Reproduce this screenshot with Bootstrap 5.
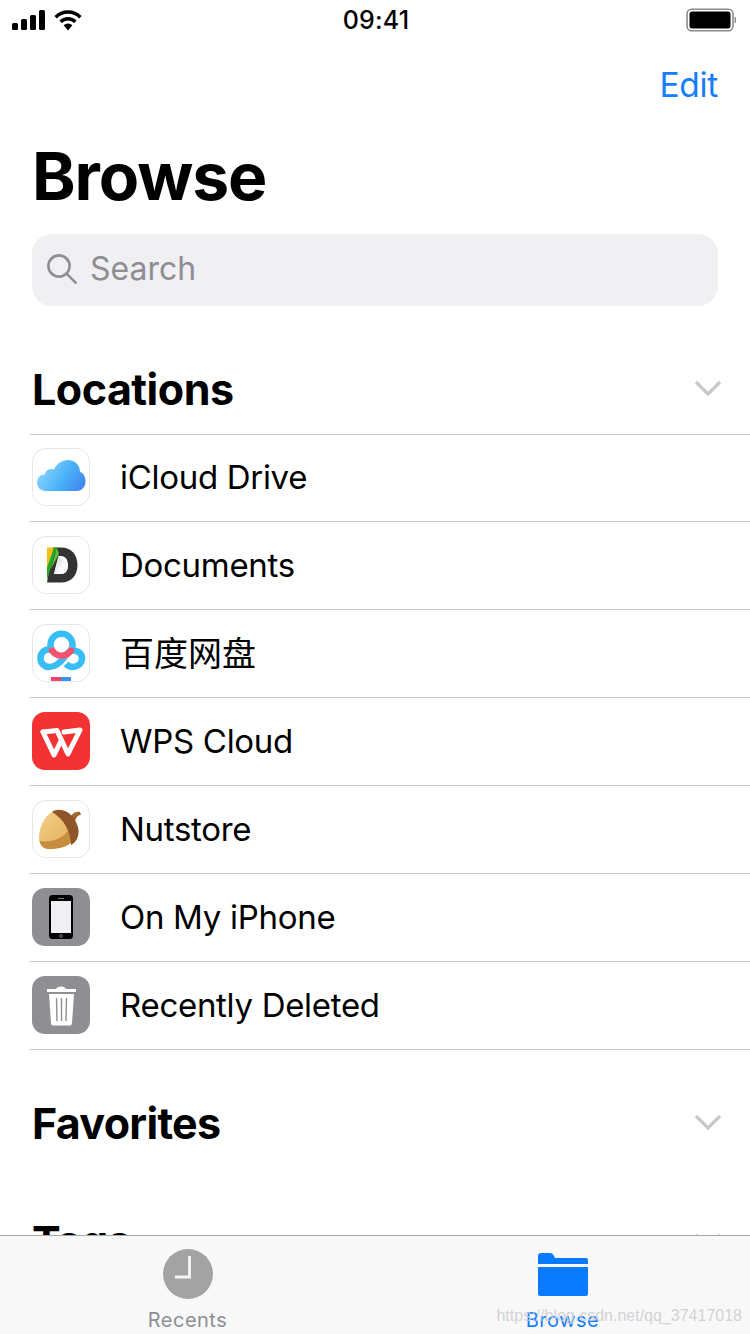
<!DOCTYPE html>
<html lang="en">
<head>
  <meta charset="UTF-8" />
  <title>Browse</title>
  <meta name="viewport" content="width=device-width, initial-scale=1" />
  <link href="https://cdn.jsdelivr.net/npm/bootstrap@5.3.0/dist/css/bootstrap.min.css" rel="stylesheet" />
  <style>
    html, body { height: 1334px; overflow: hidden; background: #fff; }
    body { font-family: Inter, "Noto Sans CJK SC", sans-serif; color: #000; position: relative; }
    .status-row { height: 40px; padding: 0 14px 0 12px; }
    .status-time { font-size: 25px; font-weight: 500; letter-spacing: .2px; line-height: 40px; width: 100%; text-align: center; position: absolute; left: 1px; top: 0; }
    .nav-row { height: 90px; padding-right: 32px; }
    .edit-link { font-size: 33.5px; font-weight: 400; color: #157efb; letter-spacing: -.3px; text-decoration: none; line-height: 50px; }
    .page-title { font-size: 66px; font-weight: 700; letter-spacing: -1.1px; line-height: 80px; margin: 6px 0 0 32px; height: 98px; }
    .search-box { margin: 0 32px; height: 72px; background: #f0f0f2; border-radius: 20px; padding: 0 0 2px 14px; gap: 12px; color: #8e8e93; font-size: 32px; }
    .section-head { padding: 0 28px 0 32px; height: 128px; }
    .section-top { padding-top: 59px; }
    .section-top svg { margin-top: 15px; }
    .section-name { font-size: 43px; font-weight: 700; letter-spacing: -.5px; margin: 0; line-height: 48px; }
    .fav-name { letter-spacing: -.7px; }
    .file-list { margin-left: 30px; border-top: 1px solid #c8c8cc; }
    .file-row { height: 88px; border-bottom: 1px solid #c8c8cc; padding: 0 0 1px 2px; gap: 30px; font-size: 33px; letter-spacing: -.3px; }
    .file-row:first-child { height: 87px; padding-bottom: 2px; }
    .file-row span { margin-top: 1px; }
    .cjk-name { font-size: 34px; letter-spacing: 0; }
    .app-icon { width: 58px; height: 58px; flex: none; display: block; }
    .fav-head { height: 146px; }
    .tag-head { height: 96px; padding-top: 21px; }
    .tab-bar { position: absolute; left: 0; right: 0; top: 1235px; height: 99px; background: #f8f8f9; border-top: 1px solid #a8a8aa; }
    .tab-item { width: 50%; padding-top: 13px; font-size: 20px; letter-spacing: .5px; line-height: 24px; color: #8e8e93; gap: 9px; }
    .tab-item svg { display: block; }
    .tab-active { color: #147efb; }
    .watermark { position: absolute; right: 8px; top: 1306px; font-family: "Liberation Sans", sans-serif; font-size: 16px; line-height: 20px; color: rgba(205, 205, 208, .9); white-space: nowrap; }
  </style>
</head>
<body>
<div class="status-row d-flex justify-content-between align-items-center">
  <div class="d-flex align-items-center gap-2">
    <svg width="34" height="20" viewBox="0 0 34 20"><g fill="#000"><rect x="0" y="13" width="6" height="7" rx="1.5"/><rect x="9" y="9" width="6" height="11" rx="1.5"/><rect x="18" y="5" width="6" height="15" rx="1.5"/><rect x="27" y="0" width="6" height="20" rx="1.5"/></g></svg>
    <svg width="28" height="21" viewBox="0 0 28 21"><g fill="none" stroke="#000" stroke-width="3.4"><path d="M1.6 7.2 A17.5 17.5 0 0 1 26.4 7.2"/><path d="M6.6 11.8 A10.5 10.5 0 0 1 21.4 11.8"/></g><path d="M9.6 15.2 A6.3 6.3 0 0 1 18.4 15.2 L14 20.4Z" fill="#000"/></svg>
  </div>
  <div class="status-time">09:41</div>
  <svg width="50" height="24" viewBox="0 0 50 24"><rect x="1" y="1.2" width="46" height="21.6" rx="4.5" fill="none" stroke="#8a8a8a" stroke-width="1.6"/><rect x="3.5" y="3.5" width="41" height="17" rx="2.5" fill="#000"/><path d="M48.6 8.5 C50 9 50.4 10.5 50.4 12 C50.4 13.5 50 15 48.6 15.5Z" fill="#8a8a8a"/></svg>
</div>

<div class="nav-row d-flex justify-content-end align-items-center">
  <a class="edit-link" href="#">Edit</a>
</div>

<h1 class="page-title">Browse</h1>

<div class="search-box d-flex align-items-center">
  <svg width="32" height="32" viewBox="0 0 32 32"><g fill="none" stroke="#8e8e93" stroke-width="2.6"><circle cx="13" cy="13" r="10.6"/><path d="M20.8 20.8 L29.6 29.6" stroke-linecap="round"/></g></svg>
  <span>Search</span>
</div>

<div class="section-head section-top d-flex justify-content-between align-items-start">
  <h2 class="section-name">Locations</h2>
  <svg width="28" height="18" viewBox="0 0 28 18"><path d="M2 2 L14 14 L26 2" fill="none" stroke="#c8c8cc" stroke-width="3.2"/></svg>
</div>

<div class="file-list">
  <div class="file-row d-flex align-items-center">
    <svg class="app-icon" viewBox="0 0 58 58"><defs><linearGradient id="cloudFill" x1="0" y1=".3" x2="1" y2=".7"><stop offset="0" stop-color="#90dafc"/><stop offset=".55" stop-color="#4cb3f9"/><stop offset="1" stop-color="#4189ef"/></linearGradient></defs><rect x=".5" y=".5" width="57" height="57" rx="13" fill="#fff" stroke="#e6e6e6"/><path d="M14 43 C8.500 43 5 39 5 34.500 C5 30 8.500 26.500 12.500 26.500 C14 21.500 18.500 20 22 21.500 C25 15.500 30 12 36 12 C43 12 48 17 48 24 C52 25 53.500 29.500 53.500 33.500 C53.500 39 49.500 43 45 43Z" fill="url(#cloudFill)"/></svg>
    <span>iCloud Drive</span>
  </div>
  <div class="file-row d-flex align-items-center">
    <svg class="app-icon" viewBox="0 0 58 58"><defs><linearGradient id="foldFill" x1="0" y1="0" x2="1" y2="1"><stop offset="0" stop-color="#cfcfcf"/><stop offset=".6" stop-color="#fafafa"/><stop offset="1" stop-color="#fff"/></linearGradient></defs><rect x=".5" y=".5" width="57" height="57" rx="13" fill="#fff" stroke="#e6e6e6"/><path d="M21 11.500 H29 C39 11.500 45.500 18.500 45.500 29 C45.500 39.500 39 46.500 29 46.500 H15 L21 11.500Z M26.500 20 L22 38 H29 C33.500 38 36 34.500 36 29.500 C36 23.500 33.500 20 29 20Z" fill="#333" fill-rule="evenodd"/><path d="M26.500 20 L36 28 C36 34 33.500 38 29 38 H22Z" fill="url(#foldFill)"/><path d="M15 11.500 H22 L15 31Z" fill="#fbbd16"/><path d="M22 11.500 H25 L15 44 V31Z" fill="#27a81f"/><path d="M25 11.500 L27 18 L19 33 Z" fill="#55c23a"/></svg>
    <span>Documents</span>
  </div>
  <div class="file-row d-flex align-items-center">
    <svg class="app-icon" viewBox="0 0 58 58"><rect x=".5" y=".5" width="57" height="57" rx="13" fill="#fff" stroke="#e6e6e6"/><g fill="none" stroke-width="6.500"><path d="M20 26 C14 24 8.500 28 8.500 34 C8.500 40 13 43 17 43 C24 43 30 37 34 31 C37 27 41 26 44 27 C48 28 50 31 50 34.500 C50 40 45 43 41 43 C38 43 36 42 34 40" stroke="#38bdf5"/><path d="M19 24 A11 11 0 1 1 40 24" stroke="#38bdf5"/><path d="M19 24 A11 11 0 0 0 40 24" stroke="#f4536f"/></g><rect x="19" y="53" width="10" height="4" fill="#f4436a"/><rect x="29" y="53" width="10" height="4" fill="#3a96f5"/></svg>
    <span class="cjk-name">百度网盘</span>
  </div>
  <div class="file-row d-flex align-items-center">
    <svg class="app-icon" viewBox="0 0 58 58"><rect width="58" height="58" rx="13" fill="#f23233"/><g fill="none" stroke="#fff" stroke-width="5" stroke-linejoin="round" stroke-linecap="round"><path d="M11 20 L25 18.500 L36 42 L48 18 L32 20"/><path d="M11 20 L22 43 L28.500 30"/></g></svg>
    <span>WPS Cloud</span>
  </div>
  <div class="file-row d-flex align-items-center">
    <svg class="app-icon" viewBox="0 0 58 58"><defs><linearGradient id="nutFill" x1="0" y1="0" x2="1" y2="1"><stop offset="0" stop-color="#f3cf85"/><stop offset="1" stop-color="#e2ad5c"/></linearGradient></defs><rect x=".5" y=".5" width="57" height="57" rx="13" fill="#fff" stroke="#e6e6e6"/><path d="M38 18 C40 13 44 11 48 12 L49 15 C46 15 44 17 43 22Z" fill="#a0662f"/><path d="M20 12 C11 17 7 30 7 37 C7 45 11 49 17 49 C27 49 35 47 41 41 C40 29 32 18 20 12Z" fill="url(#nutFill)"/><path d="M7.500 41 C18 43 32 39 37 29 C39 33 40.500 37 41 41 C35 47 27 49 17 49 C12 49 8.500 46 7.500 41Z" fill="#c68d3e"/><path d="M20 12 C25 8 34 9 40 16 C45 22 48 30 46 36 C45 40 43 43 39 45 C39 32 32 19 20 12Z" fill="#8e5628"/></svg>
    <span>Nutstore</span>
  </div>
  <div class="file-row d-flex align-items-center">
    <svg class="app-icon" viewBox="0 0 58 58"><rect width="58" height="58" rx="13" fill="#8e8e93"/><rect x="17" y="7" width="24" height="44" rx="3.500" fill="#000"/><rect x="19" y="13" width="20" height="32" fill="#efeff4"/><rect x="26" y="10" width="6" height="1" fill="#777"/><circle cx="29" cy="48" r="1.500" fill="none" stroke="#777"/></svg>
    <span>On My iPhone</span>
  </div>
  <div class="file-row d-flex align-items-center">
    <svg class="app-icon" viewBox="0 0 58 58"><rect width="58" height="58" rx="13" fill="#8e8e93"/><path d="M15 13 H24 C25 9.500 33 9.500 34 13 H44 V16 H15Z" fill="#fff"/><path d="M17 18 H42 L40 47 C40 49 38.500 49.500 37 49.500 H22 C20.500 49.500 19 49 19 47Z" fill="#fff"/><g stroke="#8e8e93" stroke-width="1.400"><path d="M24.500 22 L25 45"/><path d="M29.500 22 V45"/><path d="M34.500 22 L34 45"/></g></svg>
    <span>Recently Deleted</span>
  </div>
</div>

<div class="section-head fav-head d-flex justify-content-between align-items-center">
  <h2 class="section-name fav-name">Favorites</h2>
  <svg width="28" height="18" viewBox="0 0 28 18"><path d="M2 2 L14 14 L26 2" fill="none" stroke="#c8c8cc" stroke-width="3.2"/></svg>
</div>
<div class="section-head tag-head d-flex justify-content-between align-items-start">
  <h2 class="section-name fav-name">Tags</h2>
  <svg class="mt-3" width="28" height="18" viewBox="0 0 28 18"><path d="M2 2 L14 14 L26 2" fill="none" stroke="#c8c8cc" stroke-width="3.2"/></svg>
</div>

<div class="tab-bar d-flex">
  <div class="tab-item d-flex flex-column align-items-center">
    <svg width="50" height="50" viewBox="0 0 50 50"><circle cx="25" cy="25" r="25" fill="#a3a3a3"/><path d="M26.500 7 V28 H12" fill="none" stroke="#f7f7f8" stroke-width="2.800"/></svg>
    <span>Recents</span>
  </div>
  <div class="tab-item tab-active d-flex flex-column align-items-center">
    <svg width="50" height="50" viewBox="0 0 50 50"><path d="M0 15 V7 C0 5 1 4 3 4 H12 C14 4 15 5 16 7 L17 9 H48 C49.500 9 50 10 50 11 V15Z" fill="#0a7aff"/><path d="M0 18 H50 V44.500 C50 46.500 49 47 47 47 H3 C1 47 0 46.500 0 44.500Z" fill="#0a7aff"/></svg>
    <span>Browse</span>
  </div>
</div>
<div class="watermark">https://blog.csdn.net/qq_37417018</div>

<script src="https://cdn.jsdelivr.net/npm/bootstrap@5.3.0/dist/js/bootstrap.bundle.min.js"></script>
</body>
</html>
